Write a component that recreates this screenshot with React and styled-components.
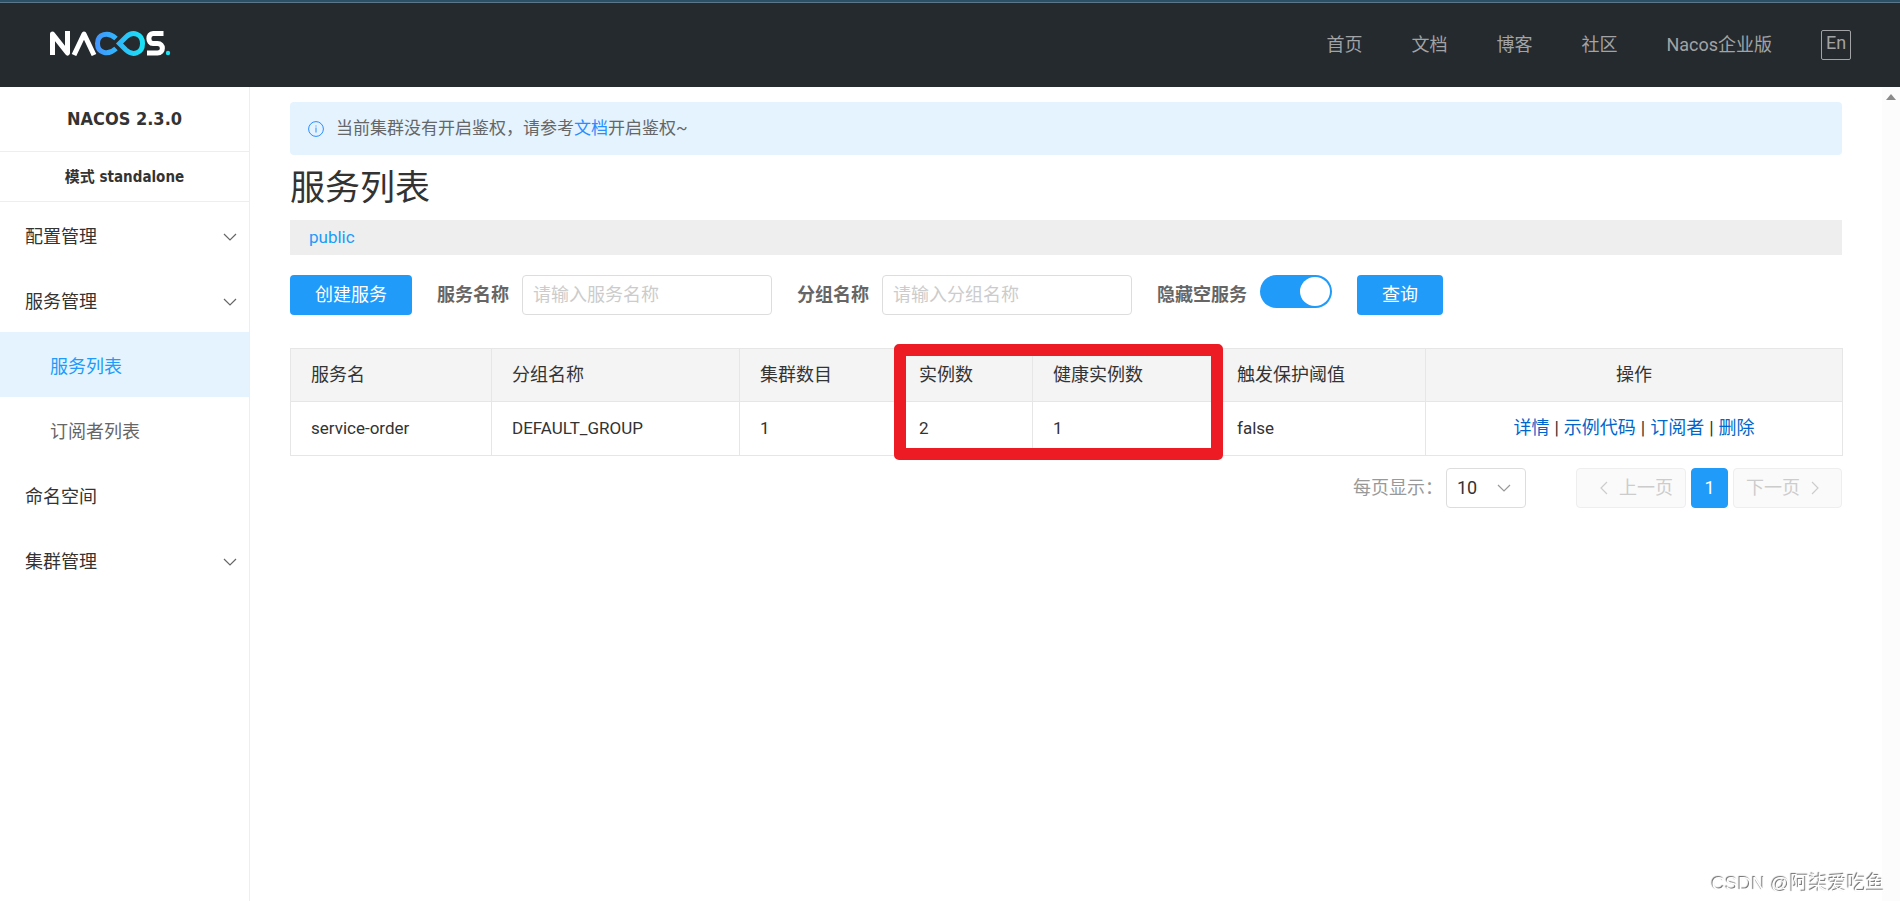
import React, { useState } from 'react';
import styled, { createGlobalStyle } from 'styled-components';

const GlobalStyle = createGlobalStyle`
  *, *::before, *::after {
    box-sizing: border-box;
  }

  body {
    margin: 0;
    background-color: #fff;
    color: #333;
    font-family: Roboto, 'Noto Sans CJK SC', sans-serif;
    font-size: 18px;
    line-height: 24px;
  }

  button, input, select {
    font: inherit;
  }

  a {
    text-decoration: none;
  }
`;

const Page = styled.div`
  display: flex;
  flex-direction: column;
  min-height: 100vh;
`;

const Header = styled.header`
  display: flex;
  align-items: center;
  justify-content: space-between;
  height: 87px;
  padding: 0 49px 0 50px;
  border-top: 2px solid #2c5066;
  box-shadow: inset 0 1px 0 #5b7789;
  background-color: #252a2f;
`;

const LogoLink = styled.a`
  display: flex;
  padding-bottom: 3px;
`;

const Nav = styled.nav`
  display: flex;
  align-items: center;
  gap: 49px;
`;

const NavLink = styled.a`
  color: #a1a3a5;
`;

const LangButton = styled.button`
  width: 30px;
  height: 30px;
  padding: 0 0 3px;
  border: 1px solid #a1a3a5;
  border-radius: 2px;
  background: none;
  color: #a1a3a5;
`;

const Body = styled.div`
  display: flex;
  flex: 1;
`;

const Sidebar = styled.aside`
  flex: 0 0 250px;
  border-right: 1px solid #eee;
`;

const SideTitle = styled.h1`
  display: flex;
  align-items: center;
  justify-content: center;
  height: 65px;
  margin: 0;
  border-bottom: 1px solid #eee;
  font-family: 'DejaVu Sans Condensed', 'Noto Sans CJK SC', sans-serif;
  font-size: 18px;
  font-weight: 700;
`;

const SideMode = styled(SideTitle).attrs({ as: 'h2' })`
  height: 50px;
  font-size: 15px;
`;

const MenuItem = styled.a`
  display: flex;
  align-items: center;
  justify-content: space-between;
  height: 65px;
  padding: 5px 12px 0 ${(props) => (props.$sub ? 50 : 25)}px;
  background-color: ${(props) => (props.$active ? '#e4f3fe' : 'transparent')};
  color: ${(props) => (props.$active ? '#209bfa' : props.$sub ? '#666' : '#333')};
`;

const Main = styled.main`
  flex: 1;
  min-width: 0;
  padding: 15px 40px;
`;

const Notice = styled.div`
  display: flex;
  align-items: center;
  gap: 12px;
  height: 53px;
  padding: 0 18px;
  border-radius: 4px;
  background-color: #e4f3fe;
  color: #666;
  font-size: 17px;

  span {
    padding-bottom: 2px;
  }

  a {
    color: #298dff;
  }
`;

const Title = styled.h2`
  margin: 6px 0 4px;
  font-size: 35px;
  font-weight: 400;
  line-height: 55px;
`;

const Namespace = styled.div`
  height: 35px;
  padding: 0 19px;
  background-color: #eee;
  font-size: 17px;
  line-height: 35px;

  a {
    color: #209bfa;
  }
`;

const Filters = styled.form`
  display: flex;
  gap: 25px;
  margin: 20px 0 33px;
`;

const PrimaryButton = styled.button`
  height: 40px;
  padding: 0 25px;
  border: 0;
  border-radius: 4px;
  background-color: #209bfa;
  color: #fff;
`;

const Field = styled.div`
  display: flex;
  gap: 13px;
  line-height: 40px;

  label {
    color: #666;
    font-weight: 700;
  }
`;

const TextInput = styled.input`
  width: 250px;
  height: 40px;
  padding: 0 10px;
  border: 1px solid #ddd;
  border-radius: 4px;
  outline: none;

  &::placeholder {
    color: #ccc;
  }
`;

const Switch = styled.input`
  appearance: none;
  display: flex;
  justify-content: flex-end;
  width: 72px;
  height: 33px;
  margin: 0;
  padding: 2px;
  border-radius: 17px;
  background-color: #209bfa;

  &::before {
    content: '';
    width: 30px;
    height: 29px;
    border-radius: 50%;
    background-color: #fff;
  }

  &:not(:checked) {
    justify-content: flex-start;
    background-color: #ccc;
  }
`;

const TableWrap = styled.div`
  position: relative;
`;

const Table = styled.table`
  width: 100%;
  border-collapse: collapse;
  table-layout: fixed;

  th, td {
    height: 54px;
    padding: 0 20px;
    border: 1px solid #e6e6e6;
    font-weight: 400;
    text-align: left;
  }

  th {
    height: 53px;
    background-color: #f4f4f4;
  }

  td {
    padding-bottom: 2px;
    font-size: 17px;
  }

  th:last-child, td:last-child {
    font-size: 18px;
    text-align: center;
  }
`;

const ActionLink = styled.a`
  color: #06c;
`;

const Divider = styled.span`
  margin: 0 5px;
`;

const Highlight = styled.div`
  position: absolute;
  top: -4px;
  bottom: -4px;
  left: 38.9%;
  width: 21.2%;
  border: 12px solid #ed1c24;
  border-radius: 5px;
  pointer-events: none;
`;

const Pager = styled.div`
  display: flex;
  justify-content: flex-end;
  gap: 5px;
  margin-top: 12px;
`;

const PageSize = styled.label`
  display: flex;
  align-items: center;
  gap: 3px;
  margin-right: 45px;
  color: #999;
`;

const SelectBox = styled.span`
  display: grid;
  align-items: center;

  select, svg {
    grid-area: 1 / 1;
  }

  svg {
    justify-self: end;
    margin-right: 15px;
    pointer-events: none;
  }
`;

const Select = styled.select`
  appearance: none;
  width: 80px;
  height: 40px;
  padding: 0 10px;
  border: 1px solid #ddd;
  border-radius: 4px;
  background-color: #fff;
  color: #333;
`;

const PageButton = styled.button`
  display: flex;
  align-items: center;
  gap: 8px;
  height: 40px;
  padding: 0 12px;
  border: 1px solid #eee;
  border-radius: 4px;
  background-color: #fafafa;
  color: #ccc;
`;

const PrevButton = styled(PageButton)`
  padding-left: 20px;
`;

const NextButton = styled(PageButton)`
  padding-right: 19px;
`;

const CurrentPage = styled(PageButton)`
  justify-content: center;
  width: 37px;
  border-color: #209bfa;
  background-color: #209bfa;
  color: #fff;
`;

const ScrollGutter = styled.div`
  flex: 0 0 18px;
  padding: 7px 4px;
  background-color: #fcfcfc;

  svg {
    display: block;
  }
`;

const Watermark = styled.div`
  position: fixed;
  right: 15px;
  bottom: 3px;
  color: #fff;
  font-family: 'Liberation Sans', 'Noto Sans CJK SC', sans-serif;
  font-size: 19px;
  line-height: 28px;
  text-shadow: -1px -1px 1px #666;
`;

const Logo = () => (
  <svg width="121" height="25" viewBox="0 0 121 25" role="img" aria-label="Nacos">
    <defs>
      <linearGradient id="loop" gradientUnits="userSpaceOnUse" x1="45" y1="0" x2="95" y2="0">
        <stop offset="0" stopColor="#4393ff" />
        <stop offset="1" stopColor="#18e4f5" />
      </linearGradient>
    </defs>
    <g fill="none" strokeWidth="5">
      <path d="M2.5 24V3L17.5 22V0" stroke="#fff" strokeLinejoin="round" />
      <path d="M24 24L34 3L44 24" stroke="#fff" strokeLinejoin="round" />
      <path
        d="M66 17.5C58 25 47.5 22 47.5 12.5C47.5 3 58 0 66 7.5M69.5 12.5L76 6C83 -0.5 92.5 3 92.5 12.5C92.5 22 83 25.5 76 19Z"
        stroke="url(#loop)"
      />
      <path d="M113.5 2.5H103C97.5 2.5 97.5 12.5 103 12.5H107.5C114 12.5 114 22 107.5 22H97" stroke="#fff" />
    </g>
    <circle cx="118" cy="22" r="2.2" fill="#18e4f5" />
  </svg>
);

const Chevron = ({ direction = 'down', color = '#666' }) => {
  const paths = {
    down: 'M1 4L7 10L13 4',
    left: 'M10 1L4 7L10 13',
    right: 'M4 1L10 7L4 13',
  };

  return (
    <svg width="14" height="14" viewBox="0 0 14 14" fill="none" stroke={color} strokeWidth="1.2" aria-hidden="true">
      <path d={paths[direction]} />
    </svg>
  );
};

const InfoIcon = () => (
  <svg width="16" height="16" viewBox="0 0 16 16" fill="none" stroke="#298dff" aria-hidden="true">
    <circle cx="8" cy="8" r="7.4" />
    <path d="M8 4.5V5.5M8 6.5V11.5" />
  </svg>
);

const navLinks = ['首页', '文档', '博客', '社区', 'Nacos企业版'];

const menu = [
  { label: '配置管理', expandable: true },
  { label: '服务管理', expandable: true },
  { label: '服务列表', sub: true, active: true },
  { label: '订阅者列表', sub: true },
  { label: '命名空间' },
  { label: '集群管理', expandable: true },
];

const columns = [
  { title: '服务名', width: 201 },
  { title: '分组名称', width: 248 },
  { title: '集群数目', width: 159 },
  { title: '实例数', width: 134 },
  { title: '健康实例数', width: 184 },
  { title: '触发保护阈值', width: 209 },
  { title: '操作', width: 417 },
];

const services = [
  { name: 'service-order', group: 'DEFAULT_GROUP', clusters: 1, instances: 2, healthy: 1, threshold: 'false' },
];

const actions = ['详情', '示例代码', '订阅者', '删除'];

const App = () => {
  const [hideEmpty, setHideEmpty] = useState(true);

  return (
    <Page>
      <GlobalStyle />
      <Header>
        <LogoLink href="#">
          <Logo />
        </LogoLink>
        <Nav>
          {navLinks.map((link) => (
            <NavLink key={link} href="#">{link}</NavLink>
          ))}
          <LangButton type="button">En</LangButton>
        </Nav>
      </Header>
      <Body>
        <Sidebar>
          <SideTitle>NACOS 2.3.0</SideTitle>
          <SideMode>模式 standalone</SideMode>
          {menu.map((item) => (
            <MenuItem key={item.label} href="#" $sub={item.sub} $active={item.active}>
              {item.label}
              {item.expandable && <Chevron />}
            </MenuItem>
          ))}
        </Sidebar>
        <Main>
          <Notice>
            <InfoIcon />
            <span>当前集群没有开启鉴权，请参考<a href="#">文档</a>开启鉴权~</span>
          </Notice>
          <Title>服务列表</Title>
          <Namespace>
            <a href="#">public</a>
          </Namespace>
          <Filters onSubmit={(e) => e.preventDefault()}>
            <PrimaryButton type="button">创建服务</PrimaryButton>
            <Field>
              <label htmlFor="serviceName">服务名称</label>
              <TextInput id="serviceName" placeholder="请输入服务名称" />
            </Field>
            <Field>
              <label htmlFor="groupName">分组名称</label>
              <TextInput id="groupName" placeholder="请输入分组名称" />
            </Field>
            <Field>
              <label htmlFor="hideEmpty">隐藏空服务</label>
              <Switch
                id="hideEmpty"
                type="checkbox"
                role="switch"
                checked={hideEmpty}
                onChange={(e) => setHideEmpty(e.target.checked)}
              />
            </Field>
            <PrimaryButton type="submit">查询</PrimaryButton>
          </Filters>
          <TableWrap>
            <Table>
              <colgroup>
                {columns.map((col) => (
                  <col key={col.title} width={col.width} />
                ))}
              </colgroup>
              <thead>
                <tr>
                  {columns.map((col) => (
                    <th key={col.title}>{col.title}</th>
                  ))}
                </tr>
              </thead>
              <tbody>
                {services.map((service) => (
                  <tr key={service.name}>
                    <td>{service.name}</td>
                    <td>{service.group}</td>
                    <td>{service.clusters}</td>
                    <td>{service.instances}</td>
                    <td>{service.healthy}</td>
                    <td>{service.threshold}</td>
                    <td>
                      {actions.map((action, i) => (
                        <React.Fragment key={action}>
                          {i > 0 && <Divider>|</Divider>}
                          <ActionLink href="#">{action}</ActionLink>
                        </React.Fragment>
                      ))}
                    </td>
                  </tr>
                ))}
              </tbody>
            </Table>
            <Highlight />
          </TableWrap>
          <Pager>
            <PageSize>
              每页显示：
              <SelectBox>
                <Select defaultValue="10">
                  <option>10</option>
                  <option>20</option>
                </Select>
                <Chevron color="#999" />
              </SelectBox>
            </PageSize>
            <PrevButton type="button" disabled>
              <Chevron direction="left" color="#ccc" />
              上一页
            </PrevButton>
            <CurrentPage type="button">1</CurrentPage>
            <NextButton type="button" disabled>
              下一页
              <Chevron direction="right" color="#ccc" />
            </NextButton>
          </Pager>
        </Main>
        <ScrollGutter>
          <svg width="10" height="6" viewBox="0 0 10 6" aria-hidden="true">
            <path d="M5 0L10 6H0Z" fill="#8a8a8a" />
          </svg>
        </ScrollGutter>
      </Body>
      <Watermark>CSDN @阿柒爱吃鱼</Watermark>
    </Page>
  );
};

export default App;
